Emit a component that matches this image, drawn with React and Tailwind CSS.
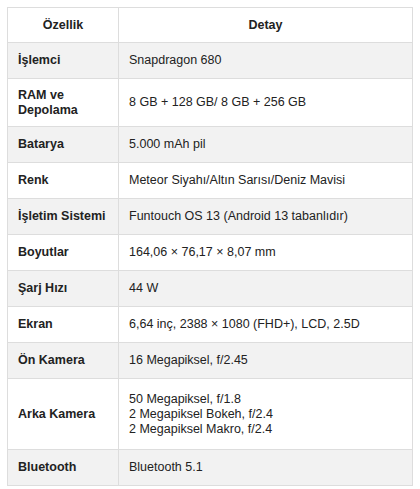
const rows = [
  ["İşlemci", ["Snapdragon 680"]],
  ["RAM ve Depolama", ["8 GB + 128 GB/ 8 GB + 256 GB"]],
  ["Batarya", ["5.000 mAh pil"]],
  ["Renk", ["Meteor Siyahı/Altın Sarısı/Deniz Mavisi"]],
  ["İşletim Sistemi", ["Funtouch OS 13 (Android 13 tabanlıdır)"]],
  ["Boyutlar", ["164,06 × 76,17 × 8,07 mm"]],
  ["Şarj Hızı", ["44 W"]],
  ["Ekran", ["6,64 inç, 2388 × 1080 (FHD+), LCD, 2.5D"]],
  ["Ön Kamera", ["16 Megapiksel, f/2.45"]],
  [
    "Arka Kamera",
    ["50 Megapiksel, f/1.8", "2 Megapiksel Bokeh, f/2.4", "2 Megapiksel Makro, f/2.4"],
  ],
  ["Bluetooth", ["Bluetooth 5.1"]],
];

export default function App() {
  return (
    <div className="bg-white w-[420px] h-[489px] pt-[7px] pl-[7px] font-['Liberation_Sans',Arial,sans-serif] text-[12.5px] text-[#222]">
      <table className="table-fixed border-collapse w-[406px] leading-[15px]">
        <colgroup>
          <col className="w-[111px]" />
          <col />
        </colgroup>
        <thead>
          <tr className="h-[35px] bg-white">
            <th className="border border-[#ddd] px-[10px] font-bold text-center">Özellik</th>
            <th className="border border-[#ddd] px-[10px] font-bold text-center">Detay</th>
          </tr>
        </thead>
        <tbody>
          {rows.map(([name, values], i) => (
            <tr
              key={name}
              className={
                (i % 2 === 0 ? "bg-[#f2f2f2] " : "bg-white ") +
                (values.length > 1 ? "h-[71px]" : name.includes(" ve ") ? "h-[48px]" : "h-[36px]")
              }
            >
              <td className="border border-[#ddd] pl-[10px] pr-[4px] font-bold align-middle">{name}</td>
              <td className="border border-[#ddd] px-[10px] align-middle">
                {values.map((v) => (
                  <div key={v}>{v}</div>
                ))}
              </td>
            </tr>
          ))}
        </tbody>
      </table>
    </div>
  );
}
